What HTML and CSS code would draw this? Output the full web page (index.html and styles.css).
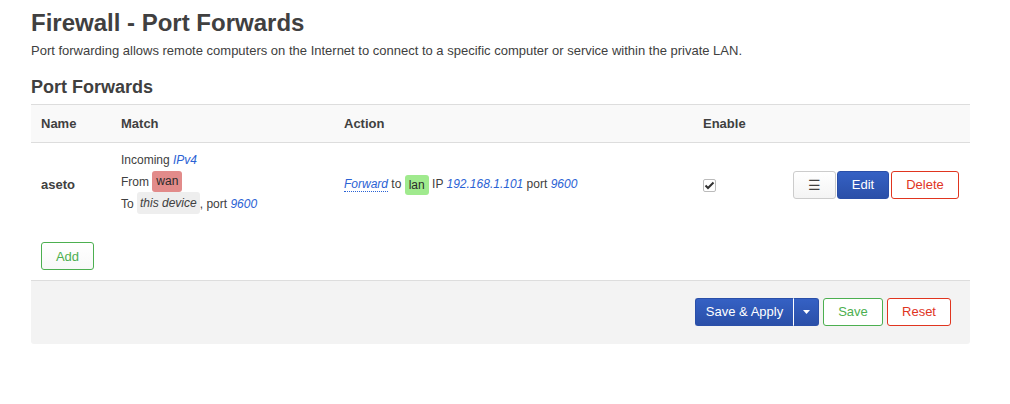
FILE: index.html
```html
<!DOCTYPE html>
<html>
<head>
<meta charset="utf-8">
<link rel="stylesheet" href="styles.css">
</head>
<body>
<div class="page">
  <h2 class="title">Firewall - Port Forwards</h2>
  <p class="desc">Port forwarding allows remote computers on the Internet to connect to a specific computer or service within the private LAN.</p>
  <h3 class="section">Port Forwards</h3>
  <div class="table">
    <div class="row head">
      <div class="c c-name">Name</div>
      <div class="c c-match">Match</div>
      <div class="c c-action">Action</div>
      <div class="c c-enable">Enable</div>
      <div class="c c-btns"></div>
    </div>
    <div class="row body">
      <div class="c c-name"><b>aseto</b></div>
      <div class="c c-match">
        <div class="ml">Incoming <i class="v">IPv4</i></div>
        <div class="ml">From <span class="zone wan">wan</span></div>
        <div class="ml">To <span class="zone dev"><i>this device</i></span>, port <i class="v">9600</i></div>
      </div>
      <div class="c c-action"><i class="v dotted">Forward</i> to <span class="zone lan">lan</span> IP <i class="v">192.168.1.101</i> port <i class="v">9600</i></div>
      <div class="c c-enable"><span class="cb"><svg width="11" height="9" viewBox="0 0 11 9"><path d="M1.5 4.5 L4 7 L9.5 1.5" fill="none" stroke="#333" stroke-width="2"/></svg></span></div>
      <div class="c c-btns">
        <button class="btn menu">&#9776;</button>
        <button class="btn edit">Edit</button>
        <button class="btn del">Delete</button>
      </div>
    </div>
  </div>
  <div class="addrow"><button class="btn add">Add</button></div>
  <div class="footer">
    <div class="split">
      <button class="btn apply">Save &amp; Apply</button><button class="btn caret"><svg width="7" height="4" viewBox="0 0 7 4"><path d="M0 0 L7 0 L3.5 4 Z" fill="#fff"/></svg></button>
    </div>
    <button class="btn save">Save</button>
    <button class="btn reset">Reset</button>
  </div>
</div>
</body>
</html>
```
FILE: styles.css
```css
* { box-sizing: border-box; }
body {
  margin: 0;
  font-family: "Liberation Sans", Arial, sans-serif;
  font-size: 13px;
  color: #404040;
  background: #fff;
}
.page { padding: 0 0 0 31px; width: 1010px; }
.title {
  margin: 8px 0 0;
  font-size: 24px;
  line-height: 30px;
  font-weight: bold;
  color: #404040;
}
.desc { margin: 4px 0 0; line-height: 18px; }
.section {
  margin: 15px 0 0;
  font-size: 18px;
  line-height: 24px;
  font-weight: bold;
  color: #404040;
}
.table { margin-top: 5px; width: 939px; }
.row { display: flex; align-items: center; }
.head {
  background: #f9f9f9;
  border-top: 1px solid #ddd;
  border-bottom: 1px solid #ddd;
  height: 39px;
  font-weight: bold;
  font-size: 13px;
}
.body { height: 83px; font-size: 12px; }
.c { padding-left: 10px; }
.c-name { width: 80px; }
.c-match { width: 223px; }
.body .c-match { padding-bottom: 6px; }
.c-action { width: 359px; }
.c-enable { width: 90px; }
.c-btns { flex: 1; display: flex; justify-content: flex-end; padding-right: 11px; }
.body .c-name b { font-size: 13px; }
.ml { height: 22px; line-height: 22px; white-space: nowrap; }
.v { color: #2a62d4; font-style: italic; }
.dotted { border-bottom: 1px dotted #2a62d4; }
.zone {
  display: inline-block;
  vertical-align: middle;
  padding: 0 5px;
  line-height: 21px;
  border-radius: 3px;
  margin: -2px 0 0;
}
.lan { margin-top: 0; padding: 0 4px; line-height: 20px; }
.wan { background: #e28b8a; color: #2a2a2a; padding: 0 4px; }
.lan { background: #a0ea8e; color: #2a2a2a; }
.dev { background: #eee; padding: 0 3px; line-height: 22px; }
.cb {
  display: inline-flex; align-items: center; justify-content: center;
  width: 13px; height: 13px;
  border: 1px solid #bbb; border-radius: 2px; background: #fff;
  vertical-align: middle;
}
.btn {
  font-family: inherit;
  font-size: 13px;
  height: 28px;
  border-radius: 3px;
  border: 1px solid #ccc;
  background: linear-gradient(#fff, #f4f4f4);
  color: #404040;
  padding: 0 12px;
  cursor: pointer;
}
.menu { width: 43px; font-size: 14px; padding: 0; }
.edit { width: 52px; padding: 0; margin-left: 1px; background: linear-gradient(#3561c4, #2a4fa8); border-color: #2a4fa8; color: #fff; }
.del { width: 68px; padding: 0; border-color: #e0351f; color: #e0351f; background: #fff; margin-left: 2px; }
.addrow { padding: 16px 0 10px 10px; }
.add { width: 53px; height: 28px; padding: 0; border-color: #4caf50; color: #4caf50; background: linear-gradient(#fff, #f8f8f8); }
.footer {
  width: 939px;
  background: #f3f3f3;
  border-top: 1px solid #ddd;
  border-radius: 0 0 3px 3px;
  height: 64px;
  display: flex;
  justify-content: flex-end;
  align-items: center;
  padding: 0 19px 2px 0;
  gap: 4px;
}
.split { display: flex; }
.apply {
  width: 99px; padding: 0;
  background: linear-gradient(#3561c4, #2a4fa8); border-color: #2a4fa8; color: #fff;
  border-radius: 3px 0 0 3px; border-right: 1px solid #fff;
}
.caret {
  width: 25px; padding: 0;
  background: linear-gradient(#3561c4, #2a4fa8); border-color: #2a4fa8;
  border-radius: 0 3px 3px 0; border-left: 0;
  display: flex; align-items: center; justify-content: center;
}
.save { width: 60px; padding: 0; border-color: #4caf50; color: #4caf50; background: #fff; }
.reset { width: 64px; padding: 0; border-color: #e0351f; color: #e0351f; background: #fff; }
```
